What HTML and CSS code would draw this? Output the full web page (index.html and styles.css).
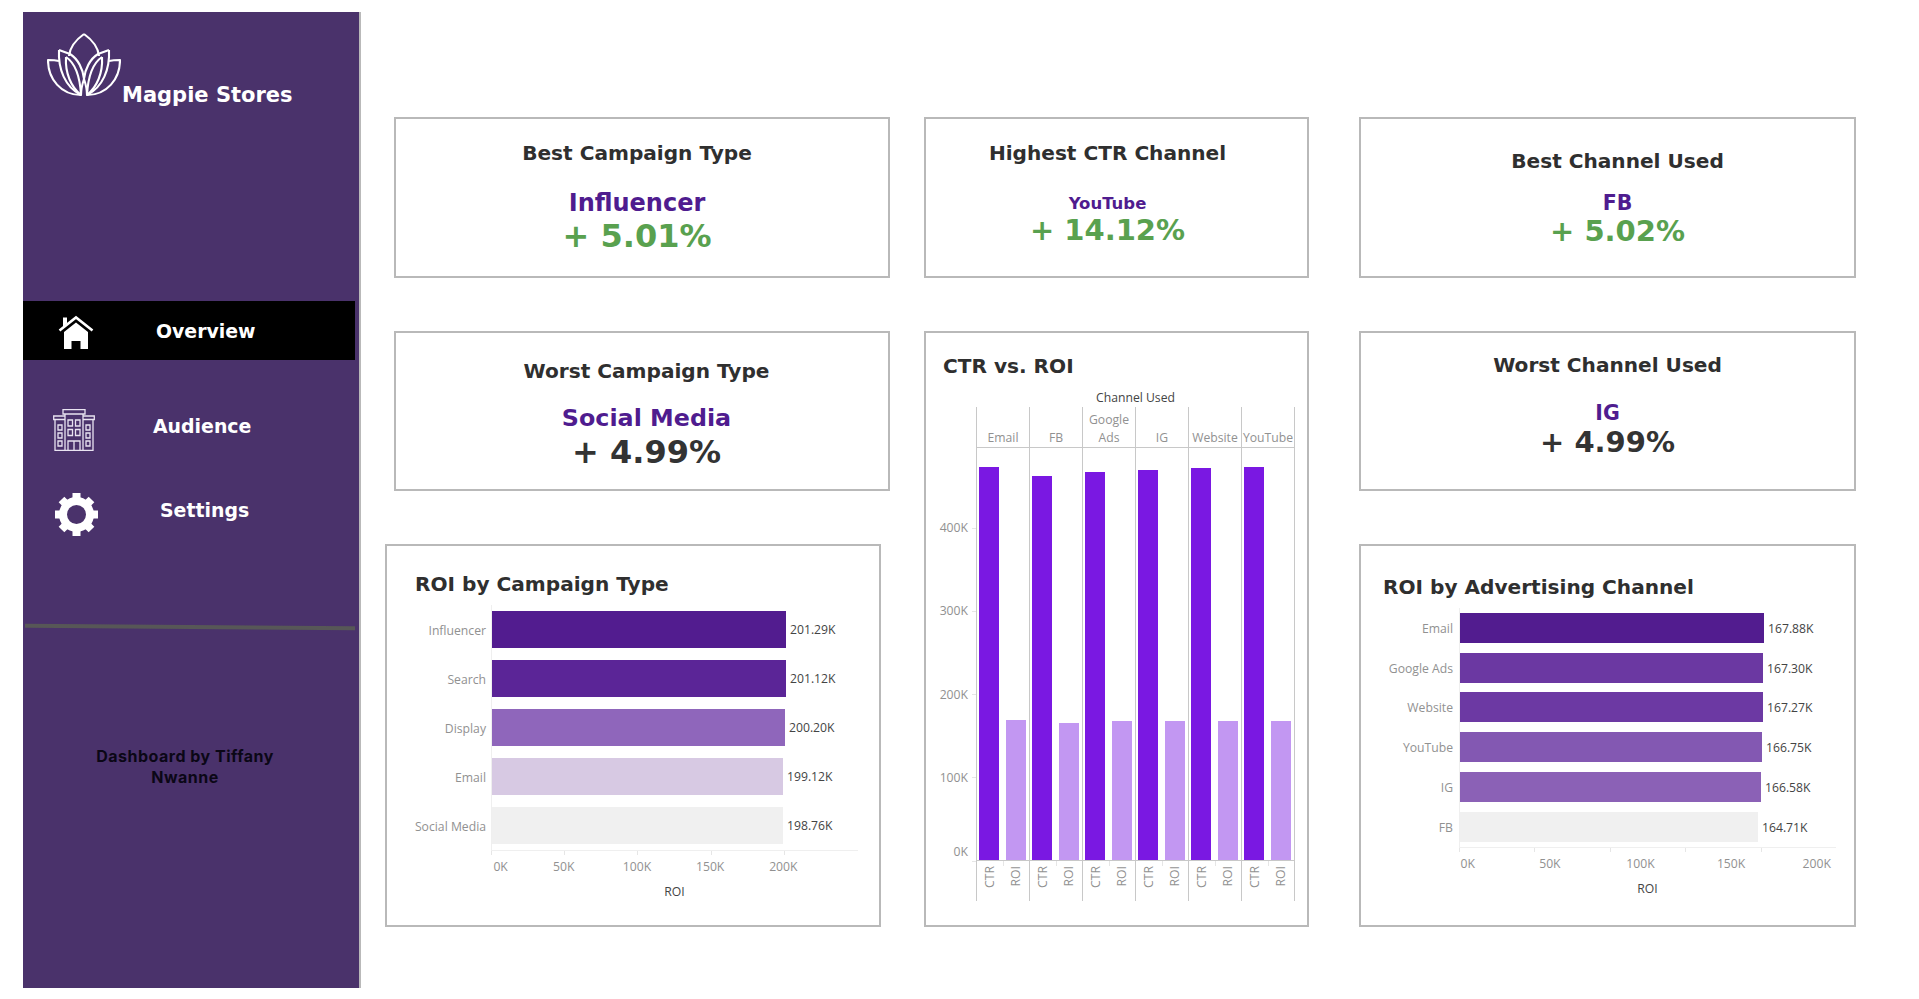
FILE: index.html
```html
<!DOCTYPE html>
<html>
<head>
<title>Magpie Stores - Overview</title>
<meta charset="UTF-8">
<link rel="stylesheet" href="styles.css">
</head>
<body>
<div class="page">

<aside class="sidebar">
  <div class="brand">
    <svg class="logo" viewBox="0 0 74 64" fill="none" stroke="#fff" stroke-width="2.1" stroke-linejoin="round">
      <path d="M37 1C30 6 23 13 22 23M37 1C44 6 51 13 52 23"/>
      <path d="M12 17L23 21C31 26 36 36 37 46C38 36 43 26 51 21L62 17"/>
      <path d="M12 17C11 36 18 54 34 62C33 44 28 30 19 24"/>
      <path d="M62 17C63 36 56 54 40 62C41 44 46 30 55 24"/>
      <path d="M12 28C8 27 4 27 1 27C1 46 14 62 34 62"/>
      <path d="M62 28C66 27 70 27 73 27C73 46 60 62 40 62"/>
      <path d="M19 24C18 40 24 54 34 62M55 24C56 40 50 54 40 62"/>
      <path d="M37 46C35 52 34 57 34 62M37 46C39 52 40 57 40 62"/>
    </svg>
    <span class="brand-name">Magpie Stores</span>
  </div>

  <nav class="nav">
    <div class="nav-item nav-overview">
      <svg class="nav-icon" width="36" height="34" viewBox="0 0 36 34">
        <path d="M5 2.5h4v6l-4 3.5z" fill="#fff"/>
        <path d="M1.5 15.5L18 2.5L34.5 15.5" fill="none" stroke="#fff" stroke-width="2.6"/>
        <path d="M6 17L18 7.5L30 17V34H22.5V26H13.5V34H6z" fill="#fff"/>
      </svg>
      <span>Overview</span>
    </div>
    <div class="nav-item nav-audience">
      <svg class="nav-icon" width="42" height="42" viewBox="0 0 42 42" fill="none" stroke="#e9e3f1" stroke-width="1.3">
        <path d="M10 0.7H32V5H10zM12 5H30V41.3H12z"/>
        <path d="M12 7H0.7V10.5H12M2 10.5V41.3H12M30 7H41.3V10.5H30M40 10.5V41.3H30"/>
        <path d="M15 11H19.5V17H15zM22.5 11H27V17H22.5zM15 20.5H19.5V26.5H15zM22.5 20.5H27V26.5H22.5z"/>
        <path d="M15 41V32H27V41M21 32V41"/>
        <path d="M5 16H9V21H5zM5 24H9V29H5zM5 32H9V37H5zM33 16H37V21H33zM33 24H37V29H33zM33 32H37V37H33z"/>
      </svg>
      <span>Audience</span>
    </div>
    <div class="nav-item nav-settings">
      <svg class="nav-icon" width="45" height="45" viewBox="-22.5 -22.5 45 45" fill="none" stroke="#fff">
        <circle r="13.5" stroke-width="8"/>
        <path stroke-width="8" d="M0 -15V-21.5M0 15V21.5M-15 0H-21.5M15 0H21.5M10.6 -10.6L15 -15M-10.6 -10.6L-15 -15M10.6 10.6L15 15M-10.6 10.6L-15 15"/>
      </svg>
      <span>Settings</span>
    </div>
  </nav>

  <div class="divider"></div>
  <p class="credit">Dashboard by Tiffany Nwanne</p>
</aside>

<main class="board">

  <section class="col col-left">
    <div class="card kpi kpi-best-type">
      <h2 class="kpi-title">Best Campaign Type</h2>
      <div class="kpi-name">Influencer</div>
      <div class="kpi-pct up">+ 5.01%</div>
    </div>
    <div class="card kpi kpi-worst-type">
      <h2 class="kpi-title">Worst Campaign Type</h2>
      <div class="kpi-name">Social Media</div>
      <div class="kpi-pct">+ 4.99%</div>
    </div>
    <div class="card chart-card chart-campaign">
      <h2 class="chart-title">ROI by Campaign Type</h2>
      <div class="hbar-row"><span class="hbar-label">Influencer</span><div class="hbar-track"><div class="hbar" style="width:294px;background:#521c8f"></div><span class="hbar-val">201.29K</span></div></div>
      <div class="hbar-row"><span class="hbar-label">Search</span><div class="hbar-track"><div class="hbar" style="width:294px;background:#5b2597"></div><span class="hbar-val">201.12K</span></div></div>
      <div class="hbar-row"><span class="hbar-label">Display</span><div class="hbar-track"><div class="hbar" style="width:293px;background:#8f66bb"></div><span class="hbar-val">200.20K</span></div></div>
      <div class="hbar-row"><span class="hbar-label">Email</span><div class="hbar-track"><div class="hbar" style="width:291px;background:#d7c9e3"></div><span class="hbar-val">199.12K</span></div></div>
      <div class="hbar-row"><span class="hbar-label">Social Media</span><div class="hbar-track"><div class="hbar" style="width:291px;background:#f0f0f0"></div><span class="hbar-val">198.76K</span></div></div>
      <div class="axis">
        <div class="axis-ticks"><i></i><i></i><i></i><i></i><i></i></div>
        <div class="axis-labels"><span>0K</span><span>50K</span><span>100K</span><span>150K</span><span>200K</span></div>
        <div class="axis-title">ROI</div>
      </div>
    </div>
  </section>

  <section class="col col-mid">
    <div class="card kpi kpi-ctr">
      <h2 class="kpi-title">Highest CTR Channel</h2>
      <div class="kpi-name">YouTube</div>
      <div class="kpi-pct up">+ 14.12%</div>
    </div>
    <div class="card chart-card chart-ctr">
      <h2 class="chart-title">CTR vs. ROI</h2>
      <div class="cc-chart">
        <div class="cc-yaxis">
          <div class="cc-ytick"><span>400K</span><i></i></div>
          <div class="cc-ytick"><span>300K</span><i></i></div>
          <div class="cc-ytick"><span>200K</span><i></i></div>
          <div class="cc-ytick"><span>100K</span><i></i></div>
          <div class="cc-ytick cc-ytick-zero"><span>0K</span><i></i></div>
        </div>
        <div class="cc-main">
          <div class="cc-caption">Channel Used</div>
          <div class="cc-groups">
            <div class="cc-group">
              <div class="cc-head">Email</div>
              <div class="cc-bars"><div class="cc-bar ctr" style="height:393px"></div><div class="cc-bar roi" style="height:140px"></div></div>
              <div class="cc-foot"><span><b>CTR</b></span><i></i><span><b>ROI</b></span></div>
            </div>
            <div class="cc-group">
              <div class="cc-head">FB</div>
              <div class="cc-bars"><div class="cc-bar ctr" style="height:384px"></div><div class="cc-bar roi" style="height:137px"></div></div>
              <div class="cc-foot"><span><b>CTR</b></span><i></i><span><b>ROI</b></span></div>
            </div>
            <div class="cc-group">
              <div class="cc-head">Google<br>Ads</div>
              <div class="cc-bars"><div class="cc-bar ctr" style="height:388px"></div><div class="cc-bar roi" style="height:139px"></div></div>
              <div class="cc-foot"><span><b>CTR</b></span><i></i><span><b>ROI</b></span></div>
            </div>
            <div class="cc-group">
              <div class="cc-head">IG</div>
              <div class="cc-bars"><div class="cc-bar ctr" style="height:390px"></div><div class="cc-bar roi" style="height:139px"></div></div>
              <div class="cc-foot"><span><b>CTR</b></span><i></i><span><b>ROI</b></span></div>
            </div>
            <div class="cc-group">
              <div class="cc-head">Website</div>
              <div class="cc-bars"><div class="cc-bar ctr" style="height:392px"></div><div class="cc-bar roi" style="height:139px"></div></div>
              <div class="cc-foot"><span><b>CTR</b></span><i></i><span><b>ROI</b></span></div>
            </div>
            <div class="cc-group">
              <div class="cc-head">YouTube</div>
              <div class="cc-bars"><div class="cc-bar ctr" style="height:393px"></div><div class="cc-bar roi" style="height:139px"></div></div>
              <div class="cc-foot"><span><b>CTR</b></span><i></i><span><b>ROI</b></span></div>
            </div>
          </div>
        </div>
      </div>
    </div>
  </section>

  <section class="col col-right">
    <div class="card kpi kpi-best-channel">
      <h2 class="kpi-title">Best Channel Used</h2>
      <div class="kpi-name">FB</div>
      <div class="kpi-pct up">+ 5.02%</div>
    </div>
    <div class="card kpi kpi-worst-channel">
      <h2 class="kpi-title">Worst Channel Used</h2>
      <div class="kpi-name">IG</div>
      <div class="kpi-pct">+ 4.99%</div>
    </div>
    <div class="card chart-card chart-channel">
      <h2 class="chart-title">ROI by Advertising Channel</h2>
      <div class="hbar-row"><span class="hbar-label">Email</span><div class="hbar-track"><div class="hbar" style="width:304px;background:#521c8f"></div><span class="hbar-val">167.88K</span></div></div>
      <div class="hbar-row"><span class="hbar-label">Google Ads</span><div class="hbar-track"><div class="hbar" style="width:303px;background:#6b38a2"></div><span class="hbar-val">167.30K</span></div></div>
      <div class="hbar-row"><span class="hbar-label">Website</span><div class="hbar-track"><div class="hbar" style="width:303px;background:#6c39a3"></div><span class="hbar-val">167.27K</span></div></div>
      <div class="hbar-row"><span class="hbar-label">YouTube</span><div class="hbar-track"><div class="hbar" style="width:302px;background:#8358b2"></div><span class="hbar-val">166.75K</span></div></div>
      <div class="hbar-row"><span class="hbar-label">IG</span><div class="hbar-track"><div class="hbar" style="width:301px;background:#8b61b6"></div><span class="hbar-val">166.58K</span></div></div>
      <div class="hbar-row"><span class="hbar-label">FB</span><div class="hbar-track"><div class="hbar" style="width:298px;background:#f0f0f0"></div><span class="hbar-val">164.71K</span></div></div>
      <div class="axis">
        <div class="axis-ticks"><i></i><i></i><i></i><i></i><i></i></div>
        <div class="axis-labels"><span>0K</span><span>50K</span><span>100K</span><span>150K</span><span>200K</span></div>
        <div class="axis-title">ROI</div>
      </div>
    </div>
  </section>

</main>
</div>
</body>
</html>
```

FILE: styles.css
```css
* { box-sizing: border-box; }
html, body { margin: 0; padding: 0; background: #fff; }
body { font-family: "DejaVu Sans", sans-serif; overflow: hidden; }
h2, p { margin: 0; }

.page { display: flex; padding: 12px 0 0 23px; }

/* sidebar */
.sidebar { width: 338px; height: 976px; flex: none; background: #4a326b; border-right: 2px solid #b9b9b9; color: #fff; }
.brand { display: flex; height: 96px; padding: 21px 0 0 24px; }
.logo { width: 74px; height: 64px; flex: none; }
.brand-name { margin: 50px 0 0 1px; font-size: 21px; font-weight: bold; line-height: 24px; white-space: nowrap; }

.nav { margin-top: 193px; font-size: 18.9px; font-weight: bold; }
.nav-item { display: flex; align-items: center; height: 60px; }
.nav-item span { margin-bottom: 10px; }
.nav-icon { flex: none; margin-bottom: 2px; }
.nav-overview { height: 59px; margin-right: 4px; padding: 0 0 0 35px; gap: 62px; background: #000; }
.nav-overview span { margin-bottom: 0; }
.nav-overview .nav-icon { margin: 3px 0 0; }
.nav-audience { margin-top: 41px; padding-left: 30px; gap: 58px; }
.nav-settings { margin-top: 24px; padding-left: 31px; gap: 61px; }

.divider { height: 4px; margin: 80px 4px 0 2px; background: #575757; transform: rotate(0.4deg); }
.credit { width: 190px; margin: 117px 0 0 67px; color: #0b0716; font-family: "Inter", sans-serif; font-size: 16px; font-weight: 700; letter-spacing: 0.5px; line-height: 21px; text-align: center; }

/* board */
.board { display: flex; margin-left: 24px; padding-top: 105px; }
.col { display: flex; flex-direction: column; gap: 53px; flex: none; }
.col-left { width: 505px; }
.col-mid { width: 385px; margin-left: 34px; }
.col-right { width: 497px; margin-left: 50px; }

.card { border: 2px solid #b9b9b9; background: #fff; }
.kpi { height: 161px; text-align: center; }
.kpi-title { font-size: 20.1px; font-weight: bold; line-height: 24px; color: #2f2f2f; }
.kpi-name { font-weight: bold; color: #4f1c8f; }
.kpi-pct { font-weight: bold; color: #333; }
.kpi-pct.up { color: #59a14f; }

.col-left .kpi { width: 496px; margin-left: 9px; }
.col-left .kpi + .kpi, .col-right .kpi + .kpi { height: 160px; }

.kpi-best-type { padding: 22px 10px 0 0; }
.kpi-best-type .kpi-name { margin-top: 22px; font-size: 24px; line-height: 32px; }
.kpi-best-type .kpi-pct { margin-top: -1px; font-size: 32px; line-height: 36px; }

.kpi-worst-type { padding: 26px 0 0 9px; }
.kpi-worst-type .kpi-name { margin-top: 19px; font-size: 23.8px; line-height: 32px; }
.kpi-worst-type .kpi-pct { margin-top: 0; font-size: 32px; line-height: 36px; }

.kpi-ctr { padding: 22px 18px 0 0; }
.kpi-ctr .kpi-name { margin-top: 29px; font-size: 16.5px; line-height: 20px; }
.kpi-ctr .kpi-pct { margin-top: -1px; font-size: 29px; line-height: 34px; }

.kpi-best-channel { padding: 30px 0 0 20px; }
.kpi-best-channel .kpi-name { margin-top: 17px; font-size: 20.5px; line-height: 26px; }
.kpi-best-channel .kpi-pct { margin-top: -1px; font-size: 29px; line-height: 32px; }

.kpi-worst-channel { padding: 20px 0 0 0; }
.kpi-worst-channel .kpi-name { margin-top: 23px; font-size: 20.5px; line-height: 26px; }
.kpi-worst-channel .kpi-pct { margin-top: 0; font-size: 29px; line-height: 32px; }

/* charts */
.chart-title { font-family: "DejaVu Sans", sans-serif; font-size: 20.1px; font-weight: bold; line-height: 24px; color: #2f2f2f; }
.chart-card { font-family: "Open Sans", sans-serif; font-size: 12.2px; color: #919191; }
.chart-campaign { width: 496px; height: 383px; padding-top: 26px; }
.chart-campaign .chart-title { margin: 0 0 9px 28px; }
.chart-channel { height: 383px; padding-top: 29px; }
.chart-channel .chart-title { margin: 0 0 9px 22px; }

.hbar-row { display: flex; }
.hbar-label { margin-right: 5px; margin-top: 2px; line-height: 16px; text-align: right; align-self: center; }
.hbar-track { display: flex; align-items: center; flex: 1; gap: 4px; border-left: 1px solid #efefef; }
.hbar { flex: none; }
.hbar-val { color: #444; line-height: 16px; }
.chart-channel .hbar-val { margin-top: 2px; }

.chart-campaign .hbar-row { width: 471px; height: 49px; }
.chart-campaign .hbar-label { width: 99px; }
.chart-channel .hbar-row { width: 475px; height: 39.8px; }
.chart-channel .hbar-label { width: 92px; margin-right: 6px; }
.chart-channel .hbar { height: 30px; }
.chart-campaign .hbar { height: 37px; }

.axis { border-top: 1px solid #efefef; }
.axis-ticks { display: flex; height: 4px; }
.axis-ticks i { border-left: 1px solid #e6e6e6; }
.axis-labels { display: flex; margin-top: 4px; line-height: 16px; }
.axis-labels span { flex: none; text-align: center; }
.axis-title { margin-top: 9px; color: #444; line-height: 16px; text-align: center; }

.chart-campaign .axis { width: 367px; margin-left: 104px; }
.chart-campaign .axis-ticks i { width: 73.2px; }
.chart-campaign .axis-labels { margin-left: -37px; }
.chart-campaign .axis-labels span { width: 73.2px; }
.chart-campaign .axis-labels span:first-child { padding-left: 20px; }

.chart-channel .axis { width: 377px; margin-left: 98px; }
.chart-channel .axis-ticks i { width: 90.6px; }
.chart-channel .axis-labels { margin-left: -45px; }
.chart-channel .axis-labels span { width: 90.6px; }
.chart-channel .axis-labels span:first-child { padding-left: 17px; }
.chart-channel .axis-labels span:last-child { padding-right: 10px; }

/* CTR vs ROI columns */
.chart-ctr { height: 596px; padding-top: 21px; }
.chart-ctr .chart-title { margin: 0 0 12px 17px; }
.cc-chart { display: flex; }
.cc-yaxis { width: 50px; padding-top: 130px; flex: none; }
.cc-ytick { display: flex; align-items: center; justify-content: flex-end; gap: 4px; height: 16px; margin-bottom: 67.25px; line-height: 16px; }
.cc-ytick i { width: 4px; height: 1px; background: #e6e6e6; }
.cc-ytick-zero span { margin-bottom: 18px; }
.cc-caption { margin-bottom: 1px; color: #444; line-height: 16px; text-align: center; }
.cc-groups { display: flex; }
.cc-group { width: 53px; border-left: 1px solid #c8c8c8; }
.cc-group:last-child { width: 54px; border-right: 1px solid #c8c8c8; }
.cc-head { display: flex; flex-direction: column; justify-content: flex-end; height: 41px; border-bottom: 1px solid #c8c8c8; line-height: 18px; text-align: center; white-space: nowrap; }
.cc-bars { display: flex; align-items: flex-end; gap: 7px; height: 413px; padding-left: 2px; border-bottom: 1px solid #c8c8c8; }
.cc-bar { width: 20px; flex: none; }
.cc-bar.ctr { background: #7a18e2; }
.cc-bar.roi { background: #c297f2; }
.cc-foot { display: flex; height: 40px; }
.cc-foot span { display: flex; justify-content: center; width: 26px; padding-top: 5px; }
.cc-foot i { width: 1px; height: 5px; background: #e6e6e6; }
.cc-foot b { font-weight: normal; line-height: 16px; writing-mode: vertical-rl; transform: rotate(180deg); height: max-content; }
```
